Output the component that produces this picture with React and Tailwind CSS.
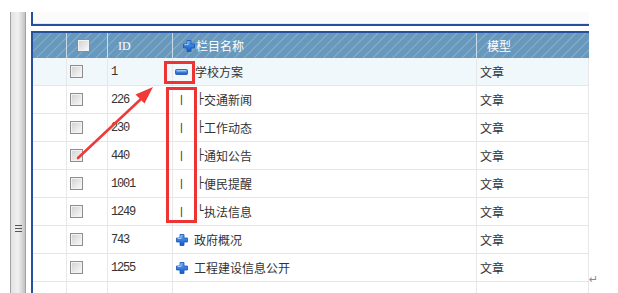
import React from 'react'

const rows = [
  { id: '1', kind: 'open', name: '学校方案', hl: true },
  { id: '226', kind: 'child', mark: '├', name: '交通新闻' },
  { id: '230', kind: 'child', mark: '├', name: '工作动态' },
  { id: '440', kind: 'child', mark: '├', name: '通知公告' },
  { id: '1001', kind: 'child', mark: '├', name: '便民提醒' },
  { id: '1249', kind: 'child', mark: '└', name: '执法信息' },
  { id: '743', kind: 'closed', name: '政府概况' },
  { id: '1255', kind: 'closed', name: '工程建设信息公开' },
]

const cols = 'grid grid-cols-[34px_41px_65px_304px_112px]'
const cjk = "font-['Noto_Sans_CJK_SC',sans-serif]"

function PlusIcon() {
  return (
    <svg width="12" height="12" viewBox="0 0 12 12" className="shrink-0">
      <defs>
        <linearGradient id="pg" x1="0" y1="0" x2="0" y2="1">
          <stop offset="0" stopColor="#5aa6f2" />
          <stop offset="1" stopColor="#1658c8" />
        </linearGradient>
      </defs>
      <path d="M4 .5h4v3.5h3.5v4H8v3.5H4V8H.5V4H4z" fill="url(#pg)" stroke="#1b55b5" strokeWidth=".8" />
      <path d="M5 1.5v3H1.5" fill="none" stroke="#bfe0ff" strokeWidth=".8" />
    </svg>
  )
}

function MinusIcon() {
  return (
    <svg width="13" height="6" viewBox="0 0 13 6" className="shrink-0">
      <defs>
        <linearGradient id="mg" x1="0" y1="0" x2="0" y2="1">
          <stop offset="0" stopColor="#6aaef5" />
          <stop offset="1" stopColor="#1a55c8" />
        </linearGradient>
      </defs>
      <rect x=".5" y=".5" width="12" height="5" rx="1" fill="url(#mg)" stroke="#1d4fb0" strokeWidth=".8" />
      <path d="M2 1.8h9" stroke="#cfe6ff" strokeWidth=".8" />
    </svg>
  )
}

function Check() {
  return (
    <div className="w-[13px] h-[13px] shrink-0 border border-[#8d8d8d] bg-linear-to-br from-[#d0d0d0] to-[#fbfbfb] shadow-[inset_0_0_0_1px_#f2f2f2]" />
  )
}

function NameCell({ r }) {
  if (r.kind === 'open')
    return (
      <div className="flex items-center pl-[2px] gap-[7px]">
        <MinusIcon />
        <span>{r.name}</span>
      </div>
    )
  if (r.kind === 'closed')
    return (
      <div className="flex items-center pl-[3px] gap-[6px]">
        <PlusIcon />
        <span>{r.name}</span>
      </div>
    )
  return (
    <div className="flex items-center pl-[7px]">
      <span className="font-['Liberation_Sans'] text-[11px] w-[17px]">|</span>
      <span className="font-['DejaVu_Sans'] text-[11px] w-[7px]">{r.mark}</span>
      <span>{r.name}</span>
    </div>
  )
}

export default function App() {
  return (
    <div className={`relative w-[618px] h-[293px] overflow-hidden bg-white flex items-start text-[12px] text-[#333] ${cjk}`}>
      {/* left scroll rail */}
      <div className="ml-[10px] mt-[12px] w-[16px] h-[300px] shrink-0 border-x border-[#a3a3a3] bg-linear-to-r from-[#e2e2e2] via-[#f1f1f1] to-[#c3c3c3] flex flex-col items-center pt-[213px] gap-[2px]">
        <div className="w-[7px] h-px bg-[#555]" />
        <div className="w-[7px] h-px bg-[#555]" />
        <div className="w-[7px] h-px bg-[#555]" />
      </div>

      <div className="ml-[5px] mt-[12px] w-[558px] shrink-0 flex flex-col">
        {/* box above */}
        <div className="h-[14px] shrink-0 bg-[#fbfbfb] border-l-2 border-b-2 border-[#264f9d] shadow-[inset_0_-1px_0_#e4ece6]" />

        {/* table */}
        <div className="mt-[5px] shrink-0 border-l-2 border-t-2 border-[#264f9d]">
          <div className={`${cols} h-[25px] text-white bg-[#6899bd] bg-[repeating-linear-gradient(135deg,#6899bd_0px,#6899bd_5px,#86afcd_6px,#6899bd_7px)]`}>
            <div className="border-r border-[#c9dbe8]" />
            <div className="border-r border-[#c9dbe8] flex items-center pl-[10px]">
              <Check />
            </div>
            <div className="border-r border-[#c9dbe8] flex items-center pl-[10px] font-['Liberation_Serif'] text-[12px]">ID</div>
            <div className="border-r border-[#c9dbe8] flex items-center pl-[10px] gap-px">
              <PlusIcon />
              <span>栏目名称</span>
            </div>
            <div className="flex items-center pl-[10px]">模型</div>
          </div>

          {rows.map(r => (
            <div key={r.id} className={`${cols} h-[28px] border-b border-[#e6e6e6] ${r.hl ? 'bg-[#f0f8fc]' : 'bg-white'}`}>
              <div className="border-r border-[#e8e8e8]" />
              <div className="border-r border-[#e8e8e8] flex items-center pl-[3px]">
                <Check />
              </div>
              <div className="border-r border-[#e8e8e8] flex items-center pl-[3px] pt-[1px] font-['Liberation_Mono'] text-[12px] tracking-[-1.2px]">{r.id}</div>
              <div className="border-r border-[#e8e8e8] flex items-center">
                <NameCell r={r} />
              </div>
              <div className="border-r border-[#e8e8e8] flex items-center pl-[3px]">文章</div>
            </div>
          ))}

          <div className={`${cols} h-[28px]`}>
            <div className="border-r border-[#e8e8e8]" />
            <div className="border-r border-[#e8e8e8]" />
            <div className="border-r border-[#e8e8e8]" />
            <div className="border-r border-[#e8e8e8]" />
            <div className="border-r border-[#e8e8e8]" />
          </div>
        </div>
      </div>

      {/* paragraph mark */}
      <span className="absolute left-[589px] top-[272px] text-[11px] text-[#888] font-['DejaVu_Sans']">↵</span>

      {/* red annotations */}
      <div className="absolute left-[164px] top-[61px] w-[31px] h-[23px] border-[3px] border-[#ee3333]" />
      <div className="absolute left-[166px] top-[87px] w-[31px] h-[136px] border-[3px] border-[#ee3333]" />
      <svg className="absolute left-0 top-0" width="618" height="293">
        <path d="M78 158 L141 99" stroke="#f03a3a" strokeWidth="2.6" strokeLinecap="round" fill="none" />
        <path d="M153 87 L135.5 94.5 L144.5 103.5 Z" fill="#f03a3a" />
      </svg>
    </div>
  )
}
